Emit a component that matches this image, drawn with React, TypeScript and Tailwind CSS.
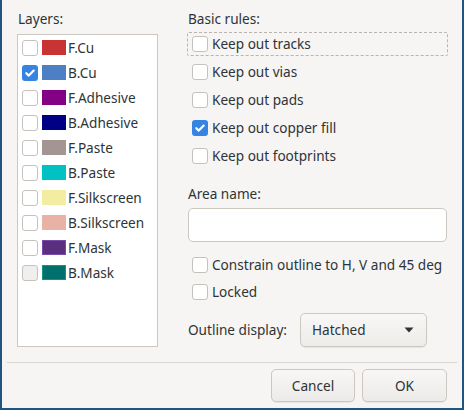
import React from "react";

const layers = [
  { name: "F.Cu", color: "bg-[#c83434]", border: "border-[#c83434]", checked: false },
  { name: "B.Cu", color: "bg-[#4d7fc4]", border: "border-[#4d7fc4]", checked: true },
  { name: "F.Adhesive", color: "bg-[#840084]", border: "border-[#840084]", checked: false },
  { name: "B.Adhesive", color: "bg-[#000084]", border: "border-[#000084]", checked: false },
  { name: "F.Paste", color: "bg-[#a39591]", border: "border-[#a39591]", checked: false },
  { name: "B.Paste", color: "bg-[#00c2c2]", border: "border-[#00c2c2]", checked: false },
  { name: "F.Silkscreen", color: "bg-[#f2eda1]", border: "border-[#f2eda1]", checked: false },
  { name: "B.Silkscreen", color: "bg-[#e8b2a7]", border: "border-[#e8b2a7]", checked: false },
  { name: "F.Mask", color: "bg-[#5a2f7e]", border: "border-[#7a4aa8]", checked: false },
  { name: "B.Mask", color: "bg-[#00706c]", border: "border-[#13918c]", checked: false, hover: true },
];

function Check({ checked, hover }: { checked?: boolean; hover?: boolean }) {
  if (checked) {
    return (
      <div className="flex h-4 w-4 flex-shrink-0 items-center justify-center rounded-[3px] bg-[#3584e4]">
        <svg width="12" height="12" viewBox="0 0 12 12">
          <path d="M2.3 6.2 L4.8 8.6 L9.7 3.6" fill="none" stroke="#fff" strokeWidth="2.2" strokeLinecap="round" strokeLinejoin="round" />
        </svg>
      </div>
    );
  }
  return (
    <div
      className={`h-4 w-4 flex-shrink-0 rounded-[3px] border border-[#c6c1bc] ${hover ? "bg-[#f0efee]" : "bg-white"}`}
    />
  );
}

function CheckRow({ label, checked, focus }: { label: string; checked?: boolean; focus?: boolean }) {
  return (
    <div
      className={`flex h-[24px] items-center gap-1 rounded-[2px] pl-[4px] ${
        focus ? "border border-dashed border-[#b8b4b0]" : "border border-transparent"
      }`}
    >
      <Check checked={checked} />
      <span>{label}</span>
    </div>
  );
}

export default function App() {
  return (
    <div
      className="box-border flex h-[410px] w-[464px] flex-col border-r-2 border-b-2 border-l-2 border-[#1f5582] bg-[#f6f5f4] text-[13.6px] leading-[18px] text-[#2e3436]"
      style={{ fontFamily: '"Noto Sans", "DejaVu Sans", sans-serif' }}
    >
      <div className="flex pt-[10px] pl-[15px]">
        {/* layers list */}
        <div className="flex w-[141px] flex-col gap-[6px]">
          <span className="pl-px">Layers:</span>
          <div className="h-[313px] border border-[#cdc7c2] bg-white pl-[4px]">
            {layers.map((l) => (
              <div key={l.name} className="flex h-[25px] items-center">
                <Check checked={l.checked} hover={l.hover} />
                <div className={`ml-1 h-[15px] w-6 border ${l.border} ${l.color}`} />
                <span className="ml-[2px]">{l.name}</span>
              </div>
            ))}
          </div>
        </div>

        {/* rules */}
        <div className="ml-[29px] flex w-[261px] flex-col">
          <span className="pl-px">Basic rules:</span>
          <div className="mt-[4px] flex flex-col gap-[4px]">
            <CheckRow label="Keep out tracks" focus />
            <CheckRow label="Keep out vias" />
            <CheckRow label="Keep out pads" />
            <CheckRow label="Keep out copper fill" checked />
            <CheckRow label="Keep out footprints" />
          </div>

          <span className="mt-[17px] pl-px">Area name:</span>
          <div className="mt-[5px] mr-px ml-px h-[34px] rounded-[5px] border border-[#cdc7c2] bg-white" />

          <div className="mt-[11px] flex flex-col gap-[3px]">
            <CheckRow label="Constrain outline to H, V and 45 deg" />
            <CheckRow label="Locked" />
          </div>

          <div className="mt-[9px] flex items-center pl-px">
            <span className="w-[112px]">Outline display:</span>
            <div className="flex h-[34px] w-[127px] items-center justify-between rounded-[5px] border border-[#cdc7c2] bg-gradient-to-b from-[#f8f7f6] to-[#eeecea] pr-[12px] pl-[11px] shadow-[0_1px_0_rgba(0,0,0,0.06)]">
              <span>Hatched</span>
              <svg width="10" height="6" viewBox="0 0 10 6">
                <path d="M0.5 0.5 L9.5 0.5 L5 5.5 Z" fill="#2e3436" />
              </svg>
            </div>
          </div>
        </div>
      </div>

      <div className="mx-[5px] mt-[15px] h-px bg-[#d9d5d1]" />

      <div className="mt-[6px] flex justify-end gap-[7px] pr-[15px]">
        <button className="h-[33px] w-[84px] rounded-[5px] border border-[#cdc7c2] bg-gradient-to-b from-[#f8f7f6] to-[#edebe9] text-[#2e3436] shadow-[0_1px_0_rgba(0,0,0,0.06)]">
          Cancel
        </button>
        <button className="h-[33px] w-[85px] rounded-[5px] border border-[#cdc7c2] bg-gradient-to-b from-[#f8f7f6] to-[#edebe9] text-[#2e3436] shadow-[0_1px_0_rgba(0,0,0,0.06)]">
          OK
        </button>
      </div>
    </div>
  );
}
